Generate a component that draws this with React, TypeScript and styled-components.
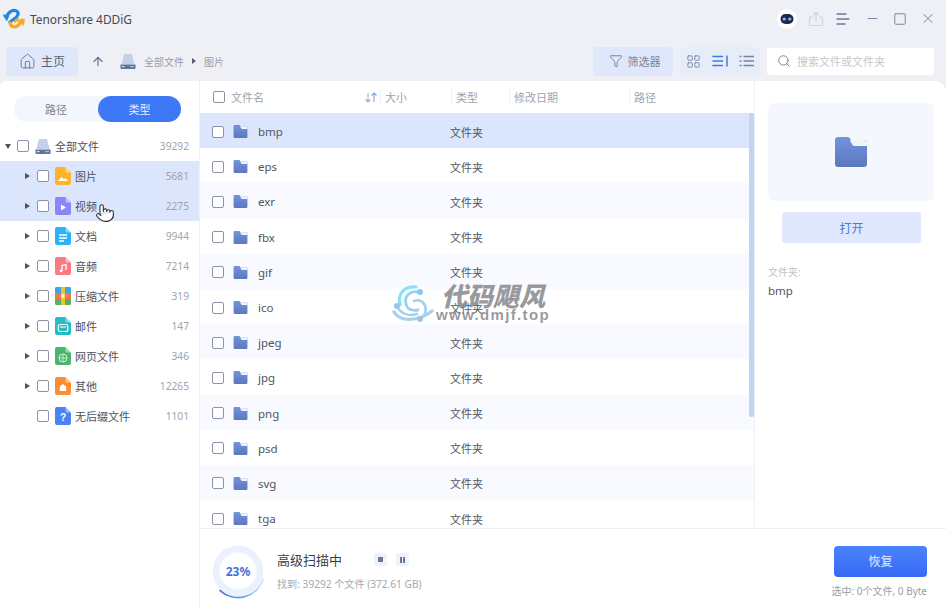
import React, { useId } from "react";
import styled, { createGlobalStyle } from "styled-components";
import { House, ArrowUp, Funnel, Search, LayoutGrid, X, Minus, Square, Pointer } from "lucide-react";

const Global = createGlobalStyle`
  html, body { margin: 0; padding: 0; }
  body { font-family: "Noto Sans", "Noto Sans CJK SC", sans-serif; background: #eef0f6; }
  * { box-sizing: border-box; }
`;

const Page = styled.div`
  position: relative;
  width: 946px;
  height: 608px;
  display: flex;
  flex-direction: column;
  overflow: hidden;
  background: #eef0f6;
`;

const TitleBar = styled.header`
  height: 40px;
  flex: none;
  display: flex;
  align-items: center;
  padding: 0 10px 3px 3px;
`;
const AppName = styled.span`
  margin-left: 5px;
  font-size: 11.9px;
  color: #444a57;
`;
const TitleActions = styled.div`
  margin-left: auto;
  display: flex;
  align-items: center;
  color: #6b7a9c;
`;
const WinButton = styled.span<{ $w: number; $ml?: number }>`
  width: ${(p) => p.$w}px;
  margin-left: ${(p) => p.$ml ?? 0}px;
  display: flex;
  justify-content: center;
  align-items: center;
`;

const Toolbar = styled.div`
  height: 30px;
  margin-top: 6px;
  flex: none;
  display: flex;
  align-items: center;
  padding: 0 12px 0 6px;
`;
const HomeButton = styled.div`
  width: 72px;
  height: 29px;
  border-radius: 4px;
  background: #dfe8fb;
  display: flex;
  align-items: center;
  justify-content: center;
  gap: 5px;
  font-size: 12px;
  color: #5a6270;
`;
const UpButton = styled.span`
  margin-left: 13px;
  width: 14px;
  display: flex;
  color: #5f7090;
`;
const Crumbs = styled.div`
  margin-left: 15px;
  display: flex;
  align-items: center;
  font-size: 10px;
  color: #9a9ea6;
`;
const CrumbLabel = styled.span`
  margin-left: 8px;
`;
const CrumbCaret = styled.span`
  width: 0;
  height: 0;
  margin: 0 8px 0 8px;
  border-left: 4px solid #555c6a;
  border-top: 3px solid transparent;
  border-bottom: 3px solid transparent;
`;
const ToolRight = styled.div`
  margin-left: auto;
  display: flex;
  align-items: center;
`;
const FilterButton = styled.div`
  width: 80px;
  height: 29px;
  padding-left: 3px;
  border-radius: 4px;
  background: #dfe8fb;
  display: flex;
  align-items: center;
  justify-content: center;
  gap: 5px;
  font-size: 11px;
  color: #7a8598;
`;
const ViewGroup = styled.div`
  width: 80px;
  height: 29px;
  margin-left: 7px;
  border-radius: 4px;
  background: #e6ecf8;
  display: flex;
  align-items: center;
  justify-content: space-around;
  padding: 0 1px;
  color: #7484a4;
`;
const SearchBox = styled.div`
  width: 167px;
  height: 27px;
  margin-left: 7px;
  border-radius: 3px;
  background: #fff;
  display: flex;
  align-items: center;
  gap: 6px;
  padding-left: 10px;
  font-size: 11px;
  color: #c4c7cd;
`;

const Main = styled.main`
  flex: 1;
  min-height: 0;
  margin-top: 5px;
  display: flex;
  background: #fff;
  border-radius: 6px 12px 0 0;
  overflow: hidden;
`;

const Sidebar = styled.aside`
  width: 200px;
  flex: none;
  padding-top: 15px;
  border-right: 1px solid #eef0f5;
`;
const Segmented = styled.div`
  width: 167px;
  height: 26px;
  margin: 0 0 9px 14px;
  border-radius: 13px;
  background: #f3f7fd;
  display: grid;
  grid-template-columns: 84px 83px;
`;
const Segment = styled.div<{ $active?: boolean }>`
  border-radius: 13px;
  display: flex;
  align-items: center;
  justify-content: center;
  font-size: 11px;
  color: ${(p) => (p.$active ? "#e8f0ff" : "#7d828c")};
  background: ${(p) => (p.$active ? "#3d78f6" : "transparent")};
`;
const TreeRow = styled.div<{ $hl?: boolean; $root?: boolean }>`
  height: 30px;
  display: flex;
  align-items: center;
  padding: 0 10px 0 ${(p) => (p.$root ? 4 : 24)}px;
  background: ${(p) => (p.$hl ? "#dbe6fc" : "transparent")};
  font-size: 11px;
  color: #4c525e;
`;
const CaretSlot = styled.span`
  width: 13px;
  flex: none;
  display: flex;
  align-items: center;
  padding-left: 1px;
`;
const CaretRight = styled.span`
  width: 0;
  height: 0;
  border-left: 5px solid #4b5262;
  border-top: 3.5px solid transparent;
  border-bottom: 3.5px solid transparent;
`;
const CaretDown = styled.span`
  width: 0;
  height: 0;
  border-top: 5px solid #4b5262;
  border-left: 3.5px solid transparent;
  border-right: 3.5px solid transparent;
`;
const Check = styled.span`
  width: 12px;
  height: 12px;
  flex: none;
  display: block;
  border: 1px solid #8c93a6;
  border-radius: 2px;
  background: #fff;
`;
const IconSlot = styled.span`
  margin: 0 4px 0 6px;
  display: flex;
`;
const TreeCount = styled.span`
  margin-left: auto;
  font-size: 10.2px;
  color: #9fa3ab;
`;

const Content = styled.div`
  flex: 1;
  min-width: 0;
  display: flex;
  flex-direction: column;
`;
const Upper = styled.div`
  flex: 1;
  min-height: 0;
  display: flex;
`;
const FileList = styled.section`
  position: relative;
  width: 555px;
  flex: none;
  border-right: 1px solid #eef0f5;
  overflow: hidden;
`;
const HeaderRow = styled.div`
  height: 32px;
  display: flex;
  align-items: center;
  font-size: 11px;
  color: #a0a4ab;
`;
const HeaderCell = styled.div<{ $w: number }>`
  width: ${(p) => p.$w}px;
  height: 16px;
  flex: none;
  display: flex;
  align-items: center;
  padding-left: 4px;
  border-left: 1px solid #eef0f4;
`;
const NameHeader = styled.div`
  width: 180px;
  flex: none;
  display: flex;
  align-items: center;
  padding-left: 13px;
  gap: 6px;
`;
const SortIcon = styled.span`
  margin-left: auto;
  margin-right: 2px;
  display: flex;
`;
const Row = styled.div<{ $tone: "sel" | "alt" | "plain" }>`
  height: 35.2px;
  display: flex;
  align-items: center;
  padding: 2px 0 0 12px;
  background: ${(p) => (p.$tone === "sel" ? "#dbe6fc" : p.$tone === "alt" ? "#f8faff" : "#fff")};
`;
const RowName = styled.span`
  width: 192px;
  margin-left: 10px;
  font-size: 11.5px;
  color: #50555f;
`;
const RowType = styled.span`
  font-size: 11px;
  color: #50555f;
`;
const FolderSlot = styled.span`
  margin-left: 9px;
  display: flex;
`;
const ScrollThumb = styled.div`
  position: absolute;
  top: 32px;
  right: 0;
  width: 5px;
  height: 304px;
  border-radius: 2px;
  background: #c4d3f3;
`;

const Preview = styled.aside`
  flex: 1;
  padding: 22px 12px 0 13px;
`;
const PreviewCard = styled.div`
  height: 98px;
  border-radius: 6px;
  background: #f4f8fe;
  display: flex;
  align-items: center;
  justify-content: center;
`;
const OpenButton = styled.div`
  width: 139px;
  height: 31px;
  margin: 11px 0 0 14px;
  border-radius: 3px;
  background: #dfe8fd;
  display: flex;
  align-items: center;
  justify-content: center;
  font-size: 12px;
  color: #4a7adf;
`;
const MetaLabel = styled.div`
  margin-top: 21px;
  font-size: 10px;
  line-height: 16px;
  color: #c0c3c9;
`;
const MetaValue = styled.div`
  margin-top: 3px;
  font-size: 11.5px;
  line-height: 16px;
  color: #50555f;
`;

const BottomBar = styled.footer`
  height: 80px;
  flex: none;
  display: flex;
  align-items: center;
  padding: 0 19px 0 10px;
  border-top: 1px solid #eef0f5;
  background: #fff;
`;
const Ring = styled.div`
  position: relative;
  width: 56px;
  height: 56px;
  flex: none;
  margin-top: 5px;
`;
const RingText = styled.span`
  position: absolute;
  inset: 0;
  display: flex;
  align-items: center;
  justify-content: center;
  font-size: 12px;
  font-weight: 700;
  color: #3f74dc;
`;
const ScanInfo = styled.div`
  margin-left: 11px;
  padding-top: 4px;
`;
const ScanTop = styled.div`
  display: flex;
  align-items: center;
`;
const ScanTitle = styled.span`
  width: 97px;
  font-size: 13px;
  line-height: 18px;
  color: #3a3e46;
`;
const MiniButton = styled.span`
  width: 13px;
  height: 13px;
  margin-right: 9px;
  border-radius: 2px;
  background: #eef2fa;
  display: flex;
  align-items: center;
  justify-content: center;
  gap: 1px;
`;
const StopMark = styled.span`
  width: 5px;
  height: 5px;
  background: #6a7896;
`;
const PauseMark = styled.span`
  width: 2px;
  height: 6px;
  background: #6a7896;
`;
const ScanSub = styled.div`
  margin-top: 8px;
  font-size: 10.15px;
  line-height: 14px;
  color: #a5a8af;
`;
const Actions = styled.div`
  margin-left: auto;
  display: flex;
  flex-direction: column;
  align-items: flex-end;
  padding-top: 6px;
`;
const RestoreButton = styled.div`
  width: 93px;
  height: 31px;
  border-radius: 4px;
  background: linear-gradient(180deg, #4a84fc, #3769f5);
  display: flex;
  align-items: center;
  justify-content: center;
  font-size: 12px;
  color: #e6eeff;
`;
const Selection = styled.div`
  margin-top: 7px;
  font-size: 10px;
  line-height: 14px;
  color: #9a9da5;
`;

const Cursor = styled.span`
  position: absolute;
  left: 95px;
  top: 203px;
  display: flex;
  color: #333;
`;
const Watermark = styled.div`
  position: absolute;
  left: 392px;
  top: 284px;
  display: flex;
  pointer-events: none;
`;
const WmText = styled.div`
  position: relative;
  width: 120px;
  height: 40px;
  margin-left: 2px;
`;
const WmTitle = styled.div`
  margin-left: 5px;
  font-size: 26px;
  line-height: 24px;
  font-weight: 900;
  font-style: italic;
  white-space: nowrap;
  color: rgba(135, 135, 140, 0.85);
`;
const WmUrl = styled.div`
  font-family: "Liberation Sans", sans-serif;
  margin-top: -1px;
  font-size: 15px;
  line-height: 15px;
  font-weight: 700;
  letter-spacing: 1.35px;
  white-space: nowrap;
  color: rgba(120, 120, 125, 0.75);
`;

const Logo = () => (
  <svg width="22" height="22" viewBox="0 0 22 22" fill="none" strokeLinecap="round" strokeLinejoin="round">
    <path d="M3 9 C6 4 9 2 12 2.5 C16 3.5 16 7 13 9.5 L7 14" stroke="#1f86e0" strokeWidth="3.2" />
    <path d="M0.5 7 L6 7.5 L4 12.5 Z" fill="#1f86e0" stroke="#1f86e0" strokeWidth="0.8" />
    <path d="M7 15 C8 19 12 20 15 17.5 C17 16 18 14 19 12" stroke="#f7a823" strokeWidth="3.2" />
    <path d="M15 13 L21.5 11.5 L20.5 17 Z" fill="#f7a823" stroke="#f7a823" strokeWidth="0.8" />
    <path d="M12 13.5 L15 11" stroke="#f7a823" strokeWidth="2.6" />
  </svg>
);

const Robot = () => (
  <svg width="20" height="20" viewBox="0 0 20 20">
    <circle cx="10" cy="10" r="10" fill="#fff" />
    <rect x="3.5" y="5" width="13" height="10" rx="5" fill="#1d2a4d" />
    <circle cx="7.2" cy="10" r="1.6" fill="#8fb7ff" />
    <circle cx="12.8" cy="10" r="1.6" fill="#8fb7ff" />
  </svg>
);

const ShareIcon = () => (
  <svg width="16" height="16" viewBox="0 0 16 16" fill="none" stroke="#cfd3dc" strokeWidth="1.2" strokeLinecap="round" strokeLinejoin="round">
    <path d="M5 6H2.5A1 1 0 0 0 1.5 7v6.5a1 1 0 0 0 1 1h11a1 1 0 0 0 1-1V7a1 1 0 0 0-1-1H11" />
    <path d="M8 10.5V1.5M5.5 4 8 1.5 10.5 4" />
  </svg>
);

const MenuIcon = () => (
  <svg width="14" height="14" viewBox="0 0 14 14" fill="none" stroke="#6b7a9c" strokeWidth="1.3" strokeLinecap="round">
    <path d="M1 2h9M1 7h12M1 12h8" />
  </svg>
);

const SplitListIcon = () => (
  <svg width="16" height="12" viewBox="0 0 16 12" fill="none" stroke="#3f78e0" strokeWidth="1.5" strokeLinecap="round">
    <path d="M1 1.5h9.5M1 6h9.5M1 10.5h9.5M15 1v10" />
  </svg>
);

const ListIcon = () => (
  <svg width="15" height="12" viewBox="0 0 15 12" fill="none" stroke="#7484a4" strokeWidth="1.3">
    <path d="M0.5 1.5h2M0.5 6h2M0.5 10.5h2M4.5 1.5H15M4.5 6H15M4.5 10.5H15" />
  </svg>
);

const Drive = ({ w = 16, h = 17 }: { w?: number; h?: number }) => (
  <svg width={w} height={h} viewBox="0 0 16 17">
    <path d="M4 1h8l2.5 10h-13z" fill="#c4d0e6" />
    <path d="M0.5 11.5h15v3.5a1 1 0 0 1-1 1h-13a1 1 0 0 1-1-1z" fill="#5d7398" />
    <rect x="2" y="13" width="2.5" height="1.2" fill="#dbe6fa" />
    <rect x="10" y="13" width="4" height="1.2" fill="#a9c0e6" />
  </svg>
);

const FileIcon = ({ color, children }: { color: string; children: React.ReactNode }) => (
  <svg width="16" height="18" viewBox="0 0 16 18">
    <path d="M2 0h8.5L16 5.5V16a2 2 0 0 1-2 2H2a2 2 0 0 1-2-2V2a2 2 0 0 1 2-2z" fill={color} />
    <path d="M10.5 0 16 5.5h-4a1.5 1.5 0 0 1-1.5-1.5z" fill="#fff" fillOpacity=".45" />
    {children}
  </svg>
);

const Folder = ({ w, h }: { w: number; h: number }) => {
  const id = useId();
  return (
    <svg width={w} height={h} viewBox="0 0 32 30">
      <defs>
        <linearGradient id={id} x1="0" y1="0" x2="0" y2="1">
          <stop offset="0" stopColor="#7393dc" />
          <stop offset="1" stopColor="#5c78bd" />
        </linearGradient>
      </defs>
      <path d="M3 0h9c2 0 3 1 4 3h13a3 3 0 0 1 3 3v21a3 3 0 0 1-3 3H3a3 3 0 0 1-3-3V3a3 3 0 0 1 3-3z" fill={`url(#${id})`} />
      <path d="M15 3h14a3 3 0 0 1 3 3v3H20c-2 0-3-1-5-6z" fill="#eef3fc" />
    </svg>
  );
};

const treeItems: { name: string; count: string; hl?: boolean; noCaret?: boolean; icon: React.ReactNode }[] = [
  {
    name: "图片", count: "5681", hl: true,
    icon: <FileIcon color="#fdb32b"><path d="M3 14l3.5-4 2.5 2.5 1.5-1.5L13 14z" fill="#fff" /></FileIcon>,
  },
  {
    name: "视频", count: "2275", hl: true,
    icon: <FileIcon color="#8a86f5"><path d="M6 7.5l5 3-5 3z" fill="#fff" /></FileIcon>,
  },
  {
    name: "文档", count: "9944",
    icon: <FileIcon color="#2fb0f8"><path d="M4 8h8M4 11h8M4 14h5" stroke="#fff" strokeWidth="1.3" /></FileIcon>,
  },
  {
    name: "音频", count: "7214",
    icon: <FileIcon color="#fb7a82"><path d="M7 14V8.5l4-1V13" stroke="#fff" strokeWidth="1.3" fill="none" /><circle cx="6" cy="14" r="1.3" fill="#fff" /></FileIcon>,
  },
  {
    name: "压缩文件", count: "319",
    icon: (
      <svg width="16" height="18" viewBox="0 0 16 18">
        <rect width="16" height="18" rx="2" fill="#ef7a45" />
        <path d="M0 2a2 2 0 0 1 2-2h4v6H0z" fill="#38a8e8" />
        <path d="M10 0h4a2 2 0 0 1 2 2v4h-6z" fill="#38a8e8" />
        <path d="M0 12h6v6H2a2 2 0 0 1-2-2z" fill="#4fb35f" />
        <path d="M10 12h6v4a2 2 0 0 1-2 2h-4z" fill="#4fb35f" />
        <rect x="6" width="4" height="18" fill="#f2c034" />
        <rect x="6.5" y="7" width="3" height="4" rx="1" fill="#fff" fillOpacity=".75" />
      </svg>
    ),
  },
  {
    name: "邮件", count: "147",
    icon: <FileIcon color="#26bcc6"><rect x="3.2" y="7.5" width="9.6" height="7" rx="2" fill="none" stroke="#fff" strokeWidth="1.2" /><path d="M5 10h6" stroke="#fff" strokeWidth="1.1" /></FileIcon>,
  },
  {
    name: "网页文件", count: "346",
    icon: <FileIcon color="#4cb56d"><circle cx="8" cy="11" r="4" fill="none" stroke="#d6f2dd" strokeWidth="1" /><path d="M4 11h8M8 7v8" stroke="#d6f2dd" strokeWidth=".8" /></FileIcon>,
  },
  {
    name: "其他", count: "12265",
    icon: <FileIcon color="#fd8d32"><path d="M8 7l3.2 2.6V14H4.8V9.6z" fill="#fff" /></FileIcon>,
  },
  {
    name: "无后缀文件", count: "1101", noCaret: true,
    icon: <FileIcon color="#4a82f2"><text x="8" y="14" textAnchor="middle" fontSize="10" fontWeight="700" fill="#fff" fontFamily="Liberation Sans">?</text></FileIcon>,
  },
];

const files = ["bmp", "eps", "exr", "fbx", "gif", "ico", "jpeg", "jpg", "png", "psd", "svg", "tga"];

const App = () => (
  <Page>
    <Global />
    <TitleBar>
      <Logo />
      <AppName>Tenorshare 4DDiG</AppName>
      <TitleActions>
        <WinButton $w={20}><Robot /></WinButton>
        <WinButton $w={38}><ShareIcon /></WinButton>
        <WinButton $w={16}><MenuIcon /></WinButton>
        <WinButton $w={42}><Minus size={15} strokeWidth={1.4} /></WinButton>
        <WinButton $w={14}><Square size={16} strokeWidth={1.5} /></WinButton>
        <WinButton $w={16} $ml={13}><X size={17} strokeWidth={1.4} /></WinButton>
      </TitleActions>
    </TitleBar>

    <Toolbar>
      <HomeButton>
        <House size={17} strokeWidth={1.3} color="#6a7488" />
        主页
      </HomeButton>
      <UpButton><ArrowUp size={15} strokeWidth={2} /></UpButton>
      <Crumbs>
        <Drive />
        <CrumbLabel>全部文件</CrumbLabel>
        <CrumbCaret />
        <span>图片</span>
      </Crumbs>
      <ToolRight>
        <FilterButton>
          <Funnel size={14} strokeWidth={1.4} color="#64718a" />
          筛选器
        </FilterButton>
        <ViewGroup>
          <LayoutGrid size={15} strokeWidth={1.4} />
          <SplitListIcon />
          <ListIcon />
        </ViewGroup>
        <SearchBox>
          <Search size={14} strokeWidth={1.5} color="#6b7588" />
          搜索文件或文件夹
        </SearchBox>
      </ToolRight>
    </Toolbar>

    <Main>
      <Sidebar>
        <Segmented>
          <Segment>路径</Segment>
          <Segment $active>类型</Segment>
        </Segmented>
        <TreeRow $root>
          <CaretSlot><CaretDown /></CaretSlot>
          <Check />
          <IconSlot><Drive /></IconSlot>
          全部文件
          <TreeCount>39292</TreeCount>
        </TreeRow>
        {treeItems.map((t) => (
          <TreeRow key={t.name} $hl={t.hl}>
            <CaretSlot>{!t.noCaret && <CaretRight />}</CaretSlot>
            <Check />
            <IconSlot>{t.icon}</IconSlot>
            {t.name}
            <TreeCount>{t.count}</TreeCount>
          </TreeRow>
        ))}
      </Sidebar>

      <Content>
        <Upper>
          <FileList>
            <HeaderRow>
              <NameHeader>
                <Check />
                文件名
                <SortIcon>
                  <svg width="14" height="11" viewBox="0 0 14 11" fill="none" strokeWidth="1.1">
                    <path d="M4 1v9M1.5 7.5 4 10l2.5-2.5" stroke="#a9adb5" />
                    <path d="M10 10V1M7.5 3.5 10 1l2.5 2.5" stroke="#7da6ee" />
                  </svg>
                </SortIcon>
              </NameHeader>
              <HeaderCell $w={71}>大小</HeaderCell>
              <HeaderCell $w={58}>类型</HeaderCell>
              <HeaderCell $w={120}>修改日期</HeaderCell>
              <HeaderCell $w={100}>路径</HeaderCell>
            </HeaderRow>
            {files.map((f, i) => (
              <Row key={f} $tone={i === 0 ? "sel" : i % 2 === 0 ? "alt" : "plain"}>
                <Check />
                <FolderSlot><Folder w={15} h={13} /></FolderSlot>
                <RowName>{f}</RowName>
                <RowType>文件夹</RowType>
              </Row>
            ))}
            <ScrollThumb />
          </FileList>
          <Preview>
            <PreviewCard><Folder w={32} h={30} /></PreviewCard>
            <OpenButton>打开</OpenButton>
            <MetaLabel>文件夹:</MetaLabel>
            <MetaValue>bmp</MetaValue>
          </Preview>
        </Upper>
        <BottomBar>
          <Ring>
            <svg width="56" height="56" viewBox="0 0 56 56" fill="none">
              <defs>
                <linearGradient id="ringArc" x1="0" y1="0" x2="1" y2="0">
                  <stop offset="0" stopColor="#4a7fe0" />
                  <stop offset="0.6" stopColor="#6aa8ee" />
                  <stop offset="1" stopColor="#cfeafc" />
                </linearGradient>
              </defs>
              <circle cx="28" cy="28" r="22" stroke="#eaf1fc" strokeWidth="6.5" />
              <circle cx="28" cy="28" r="18.5" fill="#fff" stroke="#f4f8fe" strokeWidth="1" />
              <path d="M10 47.5 A26.5 26.5 0 0 0 53.2 36" stroke="url(#ringArc)" strokeWidth="1.8" strokeLinecap="round" />
            </svg>
            <RingText>23%</RingText>
          </Ring>
          <ScanInfo>
            <ScanTop>
              <ScanTitle>高级扫描中</ScanTitle>
              <MiniButton><StopMark /></MiniButton>
              <MiniButton><PauseMark /><PauseMark /></MiniButton>
            </ScanTop>
            <ScanSub>找到: 39292 个文件 (372.61 GB)</ScanSub>
          </ScanInfo>
          <Actions>
            <RestoreButton>恢复</RestoreButton>
            <Selection>选中: 0个文件, 0 Byte</Selection>
          </Actions>
        </BottomBar>
      </Content>
    </Main>

    <Cursor><Pointer size={20} strokeWidth={1.3} fill="#fff" /></Cursor>

    <Watermark>
      <svg width="42" height="40" viewBox="0 0 42 40" fill="none" strokeLinecap="round">
        <path d="M8 21C5 9 13 2 24 3" stroke="#86e0f8" strokeWidth="3.2" />
        <path d="M28 8C18 6 12 12 14 20C15 25 20 27 26 26" stroke="#8fd4f4" strokeWidth="2.8" />
        <path d="M22 17C30 14 37 22 32 32" stroke="#9fd2f0" strokeWidth="2.6" />
        <path d="M2 28C8 38 26 38 40 27" stroke="#a9d0ee" strokeWidth="3.4" />
        <path d="M5 22C8 29 16 33 25 30" stroke="#a4d0ee" strokeWidth="2.4" />
        <circle cx="28" cy="8" r="3" fill="#8cc8ee" />
        <circle cx="5" cy="22" r="3" fill="#9cc4e8" />
        <circle cx="28" cy="35" r="3" fill="#9cc4e8" />
      </svg>
      <WmText>
        <WmTitle>代码飓风</WmTitle>
        <WmUrl>www.dmjf.top</WmUrl>
      </WmText>
    </Watermark>
  </Page>
);

export default App;
